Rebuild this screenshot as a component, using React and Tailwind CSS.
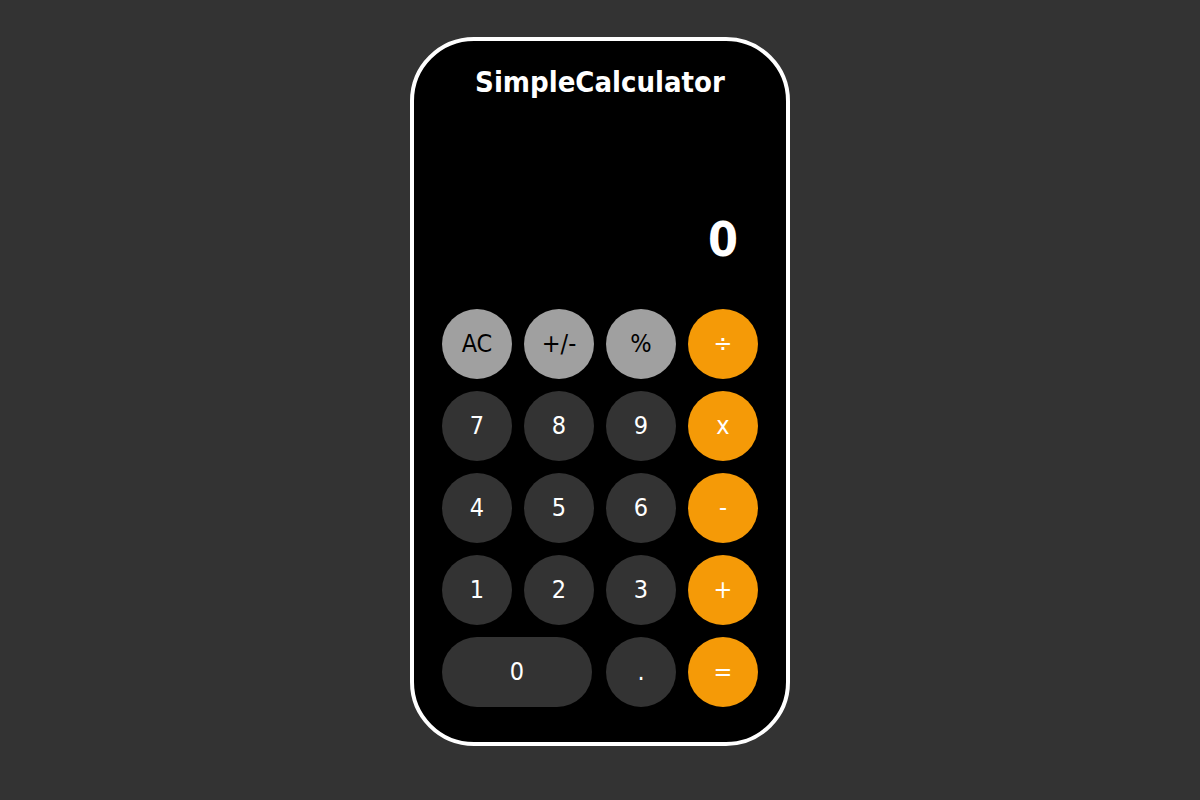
import React, { useState } from 'react';

const keys = [
  { label: 'AC', kind: 'fn' },
  { label: '+/-', kind: 'fn' },
  { label: '%', kind: 'fn' },
  { label: '÷', kind: 'op' },
  { label: '7' }, { label: '8' }, { label: '9' }, { label: 'x', kind: 'op' },
  { label: '4' }, { label: '5' }, { label: '6' }, { label: '-', kind: 'op' },
  { label: '1' }, { label: '2' }, { label: '3' }, { label: '+', kind: 'op' },
  { label: '0', wide: true }, { label: '.' }, { label: '=', kind: 'op' },
];

const tone = {
  fn: 'bg-[#a0a0a0] text-black',
  op: 'bg-[#f59a07] text-white',
  num: 'bg-[#333333] text-white',
};

export default function App() {
  const [display, setDisplay] = useState('0');

  const press = (k) => {
    if (k.label === 'AC') return setDisplay('0');
    if (!k.kind || k.label === '.') {
      setDisplay((d) => (d === '0' && k.label !== '.' ? k.label : d + k.label));
    }
  };

  return (
    <div
      className="min-h-screen w-full bg-[#333333] flex items-start justify-center pt-[37px]"
      style={{ fontFamily: '"DejaVu Sans Condensed", "DejaVu Sans", sans-serif' }}
    >
      <div className="w-[380px] h-[709px] bg-black border-4 border-white rounded-[64px] flex flex-col items-center px-7 pt-[17px]">
        <h1 className="text-[29px] font-bold text-white leading-[48px]">SimpleCalculator</h1>

        <div className="w-full flex-1 flex items-end justify-end pr-5 pb-[46px]">
          <span className="text-[48px] font-bold text-white leading-none">{display}</span>
        </div>

        <div className="grid grid-cols-4 gap-3 w-[316px] mb-[35px]">
          {keys.map((k) => (
            <button
              key={k.label}
              onClick={() => press(k)}
              className={`h-[70px] rounded-full flex items-center justify-center text-[25px] ${
                k.wide ? 'col-span-2 w-[150px]' : ''
              } ${tone[k.kind || 'num']}`}
            >
              {k.label}
            </button>
          ))}
        </div>
      </div>
    </div>
  );
}
